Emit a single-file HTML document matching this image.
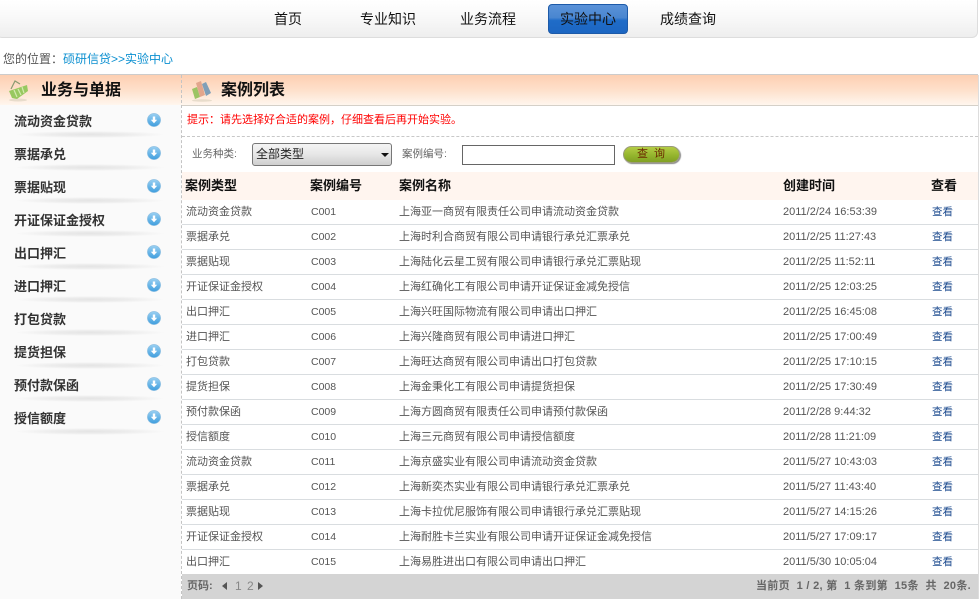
<!DOCTYPE html>
<html lang="zh"><head><meta charset="utf-8"><style>
html,body{margin:0;padding:0;background:#fff;width:980px;height:599px;overflow:hidden}
body{position:relative;font-family:"Liberation Sans","WenQuanYi Zen Hei","Noto Sans CJK SC",sans-serif;color:#444}
.a{position:absolute;white-space:nowrap}
.nav{top:0;height:38px;line-height:38px;font-size:14px;color:#111}
.side{left:14px;font-size:13px;font-weight:bold;color:#333;line-height:16px}
.shadow{position:absolute;left:15px;width:150px;height:7px;background:radial-gradient(ellipse 50% 50% at 50% 50%,#e4e4e4 0%,#ececec 50%,rgba(250,250,250,0) 100%)}
.ico{position:absolute;left:147px;width:14px;height:14px}
.r{position:absolute;left:182px;width:796px;height:25px;border-bottom:1px solid #d9dde0;box-sizing:content-box}
.r span{position:absolute;top:5px;line-height:16px;font-size:11px;color:#555;white-space:nowrap}
.r .c1{left:4px}.r .c2{left:129px;font-size:10.5px}.r .c3{left:217px}.r .c4{left:601px}.r .c5{left:750px;font-size:10.5px;color:#1d4b8f}
.h{top:178px;font-size:13px;font-weight:bold;color:#111;line-height:16px}
</style></head><body>

<div class="a" style="left:-4px;top:0;width:982px;height:38px;box-sizing:border-box;background:linear-gradient(180deg,#fff 0%,#f9f9f9 45%,#eeeeee 100%);border:1px solid #ddd;border-top:0;border-radius:0 0 6px 6px"></div>
<div class="a nav" style="left:274px">首页</div>
<div class="a nav" style="left:360px">专业知识</div>
<div class="a nav" style="left:460px">业务流程</div>
<div class="a" style="left:548px;top:4px;width:80px;height:30px;box-sizing:border-box;border:1px solid #1d5aa8;border-radius:4px;background:linear-gradient(180deg,#5a92d8 0%,#4a86d0 45%,#1f6cc8 55%,#1c66c2 100%)"></div>
<div class="a nav" style="left:560px">实验中心</div>
<div class="a nav" style="left:660px">成绩查询</div>

<div class="a" style="left:3px;top:51px;font-size:12px;line-height:16px;color:#555">您的位置：<span style="color:#0b8fd0">硕研信贷&gt;&gt;实验中心</span></div>

<div class="a" style="left:0;top:74px;width:978px;height:1px;background:#ccc"></div>
<div class="a" style="left:0;top:75px;width:978px;height:30px;background:linear-gradient(180deg,#fdcfb2 0%,#fee0cb 50%,#fff6ee 100%)"></div>
<div class="a" style="left:182px;top:105px;width:796px;height:1px;background:#d5d0c8"></div>
<div class="a" style="left:0;top:105px;width:181px;height:494px;background:#fafafa"></div>
<div class="a" style="left:181px;top:75px;width:0;height:524px;border-left:1px dashed #c4c4c4"></div>
<div class="a" style="left:978px;top:75px;width:1px;height:524px;background:#ddd"></div>

<svg class="a" style="left:8px;top:79px" width="22" height="24" viewBox="0 0 22 24"><ellipse cx="10" cy="21" rx="9" ry="1.5" fill="#e8dccb"/><path d="M3 10 L7 2 L12 5" fill="none" stroke="#8a9a70" stroke-width="1.2"/><path d="M1 12 L19 6 L20 12 L9 20 L4 19Z" fill="#98c860"/><path d="M6 11 L9 18 M10 10 L13 16 M14 8 L16 14" stroke="#d4ebb0" stroke-width="1.2"/></svg>
<div class="a" style="left:41px;top:82px;font-size:16px;font-weight:bold;color:#111;line-height:18px">业务与单据</div>

<svg class="a" style="left:190px;top:79px" width="24" height="24" viewBox="0 0 24 24"><ellipse cx="12" cy="21.5" rx="10" ry="1.3" fill="#e8dccb"/><path d="M2 10 L7 8 L10 18 L5 20Z" fill="#9cc464"/><path d="M6 4 L11 2 L15 16 L10 18Z" fill="#e2a68c"/><path d="M12 5 L16 3 L21 14 L16 17Z" fill="#7f9fb8"/></svg>
<div class="a" style="left:221px;top:82px;font-size:16px;font-weight:bold;color:#111;line-height:18px">案例列表</div>

<div class="a side" style="top:114px">流动资金贷款</div><div class="shadow" style="top:131px"></div>
<div class="a side" style="top:147px">票据承兑</div><div class="shadow" style="top:164px"></div>
<div class="a side" style="top:180px">票据贴现</div><div class="shadow" style="top:197px"></div>
<div class="a side" style="top:213px">开证保证金授权</div><div class="shadow" style="top:230px"></div>
<div class="a side" style="top:246px">出口押汇</div><div class="shadow" style="top:263px"></div>
<div class="a side" style="top:279px">进口押汇</div><div class="shadow" style="top:296px"></div>
<div class="a side" style="top:312px">打包贷款</div><div class="shadow" style="top:329px"></div>
<div class="a side" style="top:345px">提货担保</div><div class="shadow" style="top:362px"></div>
<div class="a side" style="top:378px">预付款保函</div><div class="shadow" style="top:395px"></div>
<div class="a side" style="top:411px">授信额度</div><div class="shadow" style="top:428px"></div>

<svg width="0" height="0" style="position:absolute"><defs><linearGradient id="g" x1="0" y1="0" x2="0" y2="1"><stop offset="0" stop-color="#9ad0f2"/><stop offset="1" stop-color="#3f9ede"/></linearGradient><symbol id="d" viewBox="0 0 14 14"><circle cx="7" cy="7" r="6.6" fill="url(#g)" stroke="#8fbfe0" stroke-width=".6"/><path d="M5.8 3.5h2.4v3.2h2L7 10.2 3.8 6.7h2z" fill="#fff"/></symbol></defs></svg>
<svg class="ico" style="top:113px"><use href="#d"/></svg>
<svg class="ico" style="top:146px"><use href="#d"/></svg>
<svg class="ico" style="top:179px"><use href="#d"/></svg>
<svg class="ico" style="top:212px"><use href="#d"/></svg>
<svg class="ico" style="top:245px"><use href="#d"/></svg>
<svg class="ico" style="top:278px"><use href="#d"/></svg>
<svg class="ico" style="top:311px"><use href="#d"/></svg>
<svg class="ico" style="top:344px"><use href="#d"/></svg>
<svg class="ico" style="top:377px"><use href="#d"/></svg>
<svg class="ico" style="top:410px"><use href="#d"/></svg>

<div class="a" style="left:187px;top:113px;font-size:11px;line-height:14px;color:#f00">提示：请先选择好合适的案例，仔细查看后再开始实验。</div>
<div class="a" style="left:182px;top:136px;width:796px;border-top:1px dashed #c8c8c8"></div>

<div class="a" style="left:192px;top:147px;font-size:10.5px;line-height:14px;color:#666">业务种类:</div>
<div class="a" style="left:252px;top:143px;width:140px;height:23px;box-sizing:border-box;border:1px solid #777;border-radius:3px;background:linear-gradient(180deg,#f4f4f4,#e8e8e8 45%,#cfcfcf);font-size:12px;line-height:20px;padding-left:3px;color:#222">全部类型</div>
<div class="a" style="left:381px;top:153px;width:0;height:0;border-left:4px solid transparent;border-right:4px solid transparent;border-top:4px solid #111"></div>
<div class="a" style="left:402px;top:147px;font-size:10.5px;line-height:14px;color:#666">案例编号:</div>
<div class="a" style="left:462px;top:145px;width:153px;height:20px;box-sizing:border-box;border:1px solid #666;background:#fff"></div>
<div class="a" style="left:623px;top:146px;width:57px;height:17px;box-sizing:border-box;border:1px solid #9a9a7a;border-radius:9px;background:linear-gradient(180deg,#b4cc44,#92b32c 60%,#80a024);box-shadow:1px 1px 1px #888;text-align:center;font-size:11px;line-height:15px;color:#6b2a00;letter-spacing:6px;padding-left:5px">查询</div>

<div class="a" style="left:182px;top:172px;width:796px;height:28px;background:#fff5ef"></div>
<div class="a h" style="left:185px">案例类型</div>
<div class="a h" style="left:310px">案例编号</div>
<div class="a h" style="left:399px">案例名称</div>
<div class="a h" style="left:783px">创建时间</div>
<div class="a h" style="left:931px">查看</div>

<div class="r" style="top:199px"><span class="c1">流动资金贷款</span><span class="c2">C001</span><span class="c3">上海亚一商贸有限责任公司申请流动资金贷款</span><span class="c4">2011/2/24 16:53:39</span><span class="c5">查看</span></div>
<div class="r" style="top:224px"><span class="c1">票据承兑</span><span class="c2">C002</span><span class="c3">上海时利合商贸有限公司申请银行承兑汇票承兑</span><span class="c4">2011/2/25 11:27:43</span><span class="c5">查看</span></div>
<div class="r" style="top:249px"><span class="c1">票据贴现</span><span class="c2">C003</span><span class="c3">上海陆化云星工贸有限公司申请银行承兑汇票贴现</span><span class="c4">2011/2/25 11:52:11</span><span class="c5">查看</span></div>
<div class="r" style="top:274px"><span class="c1">开证保证金授权</span><span class="c2">C004</span><span class="c3">上海红确化工有限公司申请开证保证金减免授信</span><span class="c4">2011/2/25 12:03:25</span><span class="c5">查看</span></div>
<div class="r" style="top:299px"><span class="c1">出口押汇</span><span class="c2">C005</span><span class="c3">上海兴旺国际物流有限公司申请出口押汇</span><span class="c4">2011/2/25 16:45:08</span><span class="c5">查看</span></div>
<div class="r" style="top:324px"><span class="c1">进口押汇</span><span class="c2">C006</span><span class="c3">上海兴隆商贸有限公司申请进口押汇</span><span class="c4">2011/2/25 17:00:49</span><span class="c5">查看</span></div>
<div class="r" style="top:349px"><span class="c1">打包贷款</span><span class="c2">C007</span><span class="c3">上海旺达商贸有限公司申请出口打包贷款</span><span class="c4">2011/2/25 17:10:15</span><span class="c5">查看</span></div>
<div class="r" style="top:374px"><span class="c1">提货担保</span><span class="c2">C008</span><span class="c3">上海金秉化工有限公司申请提货担保</span><span class="c4">2011/2/25 17:30:49</span><span class="c5">查看</span></div>
<div class="r" style="top:399px"><span class="c1">预付款保函</span><span class="c2">C009</span><span class="c3">上海方圆商贸有限责任公司申请预付款保函</span><span class="c4">2011/2/28 9:44:32</span><span class="c5">查看</span></div>
<div class="r" style="top:424px"><span class="c1">授信额度</span><span class="c2">C010</span><span class="c3">上海三元商贸有限公司申请授信额度</span><span class="c4">2011/2/28 11:21:09</span><span class="c5">查看</span></div>
<div class="r" style="top:449px"><span class="c1">流动资金贷款</span><span class="c2">C011</span><span class="c3">上海京盛实业有限公司申请流动资金贷款</span><span class="c4">2011/5/27 10:43:03</span><span class="c5">查看</span></div>
<div class="r" style="top:474px"><span class="c1">票据承兑</span><span class="c2">C012</span><span class="c3">上海新奕杰实业有限公司申请银行承兑汇票承兑</span><span class="c4">2011/5/27 11:43:40</span><span class="c5">查看</span></div>
<div class="r" style="top:499px"><span class="c1">票据贴现</span><span class="c2">C013</span><span class="c3">上海卡拉优尼服饰有限公司申请银行承兑汇票贴现</span><span class="c4">2011/5/27 14:15:26</span><span class="c5">查看</span></div>
<div class="r" style="top:524px"><span class="c1">开证保证金授权</span><span class="c2">C014</span><span class="c3">上海耐胜卡兰实业有限公司申请开证保证金减免授信</span><span class="c4">2011/5/27 17:09:17</span><span class="c5">查看</span></div>
<div class="r" style="top:549px;border-bottom:0"><span class="c1">出口押汇</span><span class="c2">C015</span><span class="c3">上海易胜进出口有限公司申请出口押汇</span><span class="c4">2011/5/30 10:05:04</span><span class="c5">查看</span></div>

<div class="a" style="left:182px;top:574px;width:796px;height:25px;background:#d4d4d4"></div>
<div class="a" style="left:187px;top:579px;font-size:11px;font-weight:bold;line-height:15px;color:#666">页码:</div>
<div class="a" style="left:222px;top:582px;width:0;height:0;border-top:4px solid transparent;border-bottom:4px solid transparent;border-right:5px solid #555"></div>
<div class="a" style="left:235px;top:579px;font-size:12px;line-height:15px;color:#888;letter-spacing:1px">1 2</div>
<div class="a" style="left:258px;top:582px;width:0;height:0;border-top:4px solid transparent;border-bottom:4px solid transparent;border-left:5px solid #555"></div>
<div class="a" style="left:756px;top:579px;font-size:11px;font-weight:bold;line-height:15px;color:#666;white-space:pre;letter-spacing:.3px">当前页  1 / 2, 第  1 条到第  15条  共  20条.</div>

</body></html>
